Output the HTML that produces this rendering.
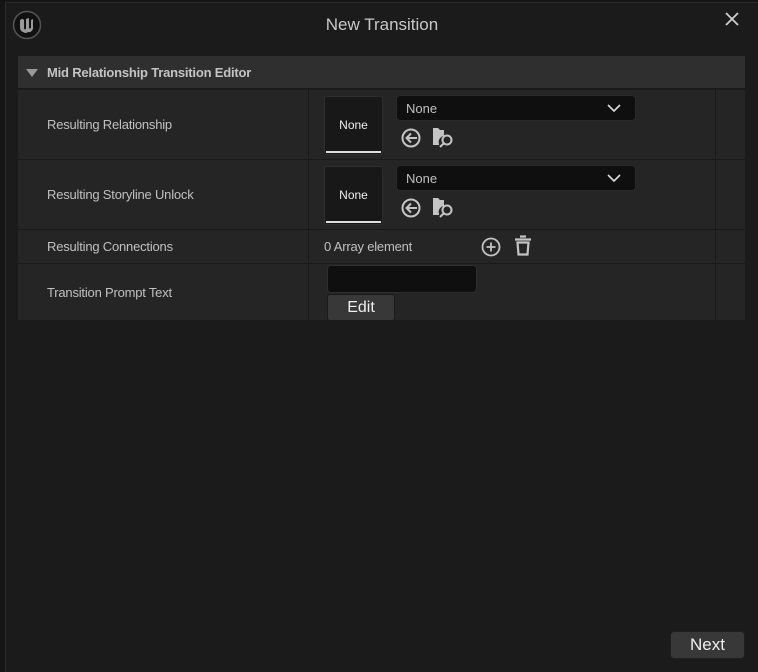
<!DOCTYPE html>
<html><head><meta charset="utf-8"><style>
*{box-sizing:border-box;margin:0;padding:0}
body{width:758px;height:672px;background:#151515;font-family:"Liberation Sans",sans-serif;position:relative;overflow:hidden;color:#c0c0c0}
.win{position:absolute;left:5px;top:2px;width:753px;height:670px;background:#1b1b1b;border-left:1px solid #2c2c2c;border-top:1px solid #2c2c2c}
.abs{position:absolute}
.title{left:0;width:752px;top:12px;text-align:center;font-size:17px;color:#c8c8c8}
.hdr{left:12px;top:53px;width:727px;height:33px;background:#2f2f2f;border-bottom:1px solid #1a1a1a}
.hdr span{position:absolute;left:29px;top:9px;font-size:13px;font-weight:bold;color:#c4c4c4;letter-spacing:-0.2px}
.row{left:12px;width:727px;background:#252525;border-bottom:1px solid #1a1a1a}
.lbl{position:absolute;left:29px;font-size:13px;color:#c0c0c0;letter-spacing:-0.2px}
.sep{position:absolute;left:290px;top:0;bottom:0;width:1px;background:#1a1a1a}
.sep2{position:absolute;left:697px;top:0;bottom:0;width:1px;background:#1a1a1a}
.thumb{position:absolute;left:306px;width:59px;height:59px;background:#181818;border:1px solid #2e2e2e;border-radius:3px;font-size:12px;color:#eee;text-align:center;line-height:57px}
.thumb:after{content:"";position:absolute;left:1px;right:1px;bottom:1px;height:2px;background:#ddd}
.dd{position:absolute;left:378px;width:240px;height:26px;background:#0f0f0f;border:1px solid #2a2a2a;border-radius:4px;font-size:13px;color:#c0c0c0;padding:5px 9px}
.dd svg{position:absolute;right:14px;top:8px}
</style></head><body>
<div class="win">
 <svg class="abs" style="left:6px;top:7px" width="30" height="30" viewBox="0 0 30 30"><circle cx="15" cy="15" r="13.5" fill="#111" stroke="#555" stroke-width="1.5"/><path d="M8 10 q3-2 4 0 v8 q0 2 2 1 V9 l3-1 v10 q1 1 2 0 V10 l2-1 v10 q-2 4-5 3 q-2 2-5 0 q-3-1-3-5z" fill="#9a9a9a"/></svg>
 <div class="abs title">New Transition</div>
 <svg class="abs" style="left:719px;top:9px" width="14" height="14" viewBox="0 0 14 14"><path d="M1 1L13 13M13 1L1 13" stroke="#cfcfcf" stroke-width="1.8"/></svg>
 <div class="abs hdr"><svg style="position:absolute;left:8px;top:13px" width="12" height="8"><path d="M0 0H12L6 8z" fill="#999"/></svg><span>Mid Relationship Transition Editor</span></div>

 <div class="abs row" style="top:87px;height:70px"><div class="lbl" style="top:27px">Resulting Relationship</div><div class="sep"></div><div class="sep2"></div>
  <div class="thumb" style="top:6px">None</div>
  <div class="dd" style="top:5px">None<svg width="14" height="8"><path d="M1 1L7 7L13 1" stroke="#ddd" stroke-width="1.6" fill="none"/></svg></div>
  <svg class="abs" style="left:382px;top:37px" width="22" height="22" viewBox="0 0 22 22"><circle cx="11" cy="11" r="8.5" fill="none" stroke="#c4c4c4" stroke-width="2"/><path d="M17 11H7M11 6.5L6.5 11L11 15.5" stroke="#c4c4c4" stroke-width="2" fill="none"/></svg>
  <svg class="abs" style="left:414px;top:36px" width="24" height="24" viewBox="0 0 24 24"><path d="M1 2h5l2 2h4v6a6 6 0 0 0-5 8v1H1z" fill="#c4c4c4"/><circle cx="15" cy="14" r="4.5" fill="none" stroke="#c4c4c4" stroke-width="2"/><path d="M12 17L8 21" stroke="#c4c4c4" stroke-width="2"/></svg>
 </div>

 <div class="abs row" style="top:157px;height:70px"><div class="lbl" style="top:27px">Resulting Storyline Unlock</div><div class="sep"></div><div class="sep2"></div>
  <div class="thumb" style="top:6px">None</div>
  <div class="dd" style="top:5px">None<svg width="14" height="8"><path d="M1 1L7 7L13 1" stroke="#ddd" stroke-width="1.6" fill="none"/></svg></div>
  <svg class="abs" style="left:382px;top:37px" width="22" height="22" viewBox="0 0 22 22"><circle cx="11" cy="11" r="8.5" fill="none" stroke="#c4c4c4" stroke-width="2"/><path d="M17 11H7M11 6.5L6.5 11L11 15.5" stroke="#c4c4c4" stroke-width="2" fill="none"/></svg>
  <svg class="abs" style="left:414px;top:36px" width="24" height="24" viewBox="0 0 24 24"><path d="M1 2h5l2 2h4v6a6 6 0 0 0-5 8v1H1z" fill="#c4c4c4"/><circle cx="15" cy="14" r="4.5" fill="none" stroke="#c4c4c4" stroke-width="2"/><path d="M12 17L8 21" stroke="#c4c4c4" stroke-width="2"/></svg>
 </div>

 <div class="abs row" style="top:227px;height:34px"><div class="lbl" style="top:9px">Resulting Connections</div><div class="sep"></div><div class="sep2"></div>
  <div class="abs" style="left:306px;top:9px;font-size:13px;letter-spacing:-0.2px">0 Array element</div>
  <svg class="abs" style="left:462px;top:6px" width="22" height="22" viewBox="0 0 22 22"><circle cx="11" cy="11" r="8.5" fill="none" stroke="#c4c4c4" stroke-width="1.8"/><path d="M11 6.5v9M6.5 11h9" stroke="#c4c4c4" stroke-width="1.8"/></svg>
  <svg class="abs" style="left:495px;top:5px" width="20" height="22" viewBox="0 0 20 22"><path d="M7 1.5h6M2 4.5h16" stroke="#c4c4c4" stroke-width="2.2" fill="none"/><path d="M4.5 7.5h11l-1 12h-9z" fill="none" stroke="#c4c4c4" stroke-width="2.2"/></svg>
 </div>

 <div class="abs row" style="top:261px;height:57px"><div class="lbl" style="top:21px">Transition Prompt Text</div><div class="sep"></div><div class="sep2"></div>
  <div class="abs" style="left:309px;top:1px;width:150px;height:28px;background:#0f0f0f;border:1px solid #2e2e2e;border-radius:4px"></div>
  <div class="abs" style="left:309px;top:30px;width:68px;height:27px;background:#383838;border:1px solid #1a1a1a;border-radius:3px;font-size:16px;color:#eee;text-align:center;line-height:25px">Edit</div>
 </div>

 <div class="abs" style="left:664px;top:628px;width:75px;height:28px;background:#383838;border:1px solid #1f1f1f;border-radius:4px;font-size:17px;color:#eee;text-align:center;line-height:26px">Next</div>
</div>
</body></html>
